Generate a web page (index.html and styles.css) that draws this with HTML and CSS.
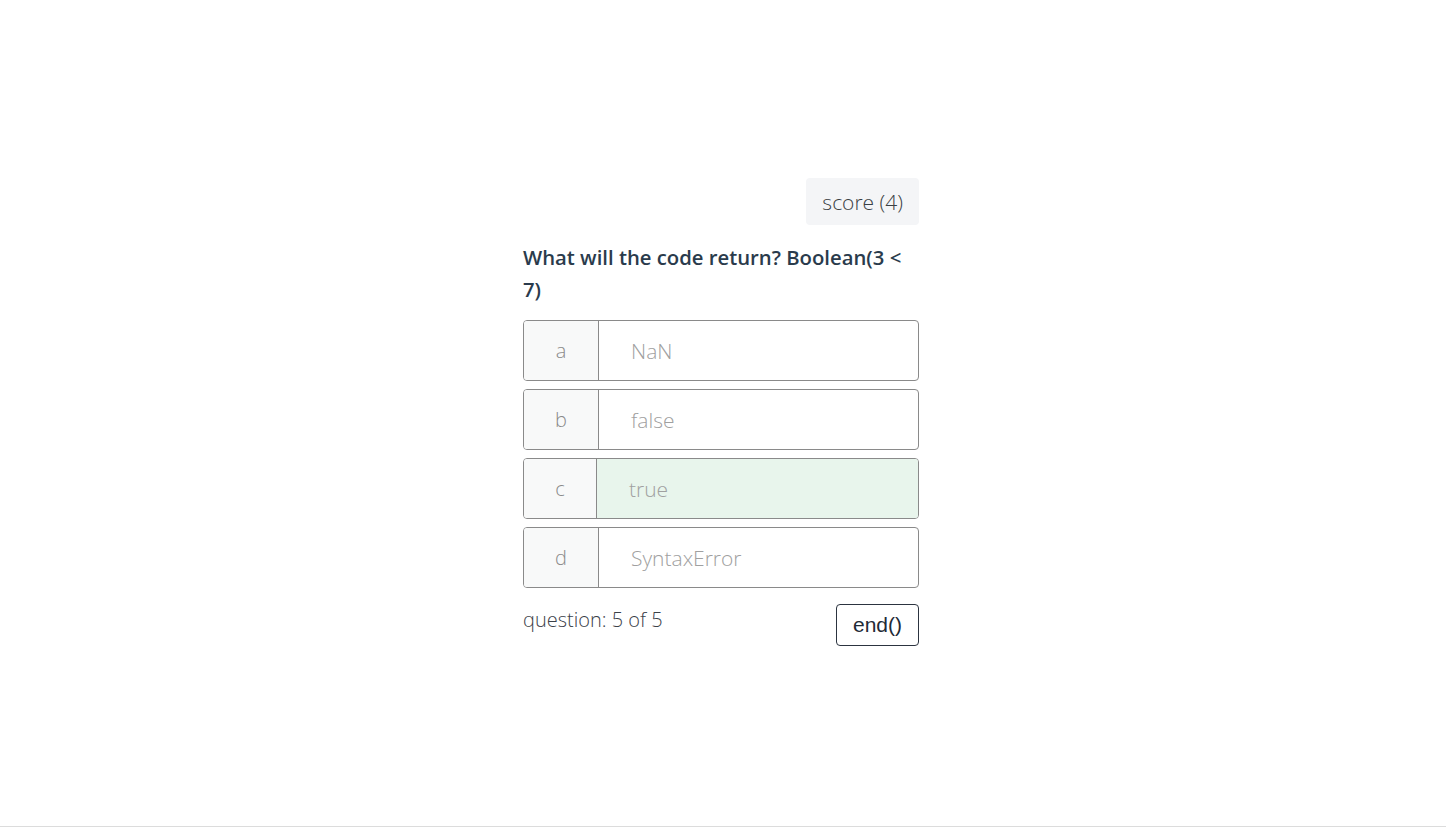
FILE: index.html
```html
<!DOCTYPE html>
<html>
<head>
<meta charset="utf-8">
<link rel="stylesheet" href="styles.css">
</head>
<body>
<div class="page">
  <div class="quiz">
    <div class="top">
      <div class="score">score (4)</div>
    </div>
    <h2 class="question">What will the code return? Boolean(3 &lt; 7)</h2>
    <div class="options">
      <div class="option"><div class="key">a</div><div class="answer">NaN</div></div>
      <div class="option"><div class="key">b</div><div class="answer">false</div></div>
      <div class="option correct"><div class="key">c</div><div class="answer">true</div></div>
      <div class="option"><div class="key">d</div><div class="answer">SyntaxError</div></div>
    </div>
    <div class="footer">
      <span class="progress">question: 5 of 5</span>
      <button class="end">end()</button>
    </div>
  </div>
</div>
</body>
</html>
```

FILE: styles.css
```css
html, body {
  margin: 0;
  padding: 0;
  background: #fff;
}
body {
  font-family: "Open Sans", "Liberation Sans", sans-serif;
  color: #2c3e50;
}
.page {
  height: 826px;
  border-bottom: 1px solid #dcdcdc;
  display: flex;
  align-items: center;
  justify-content: center;
  padding-right: 4px;
  box-sizing: content-box;
}
.quiz {
  width: 396px;
  margin-bottom: 2px;
}
.top {
  display: flex;
  justify-content: flex-end;
}
.score {
  background: #f4f5f7;
  border-radius: 4px;
  height: 47px;
  padding: 0 16px;
  display: flex;
  align-items: center;
  font-size: 21px;
  font-weight: 300;
  color: #3a3f44;
}
.question {
  margin: 16px 0 15px;
  font-size: 20.3px;
  font-weight: 600;
  line-height: 32px;
  color: #2a3b4c;
}
.options {
  display: flex;
  flex-direction: column;
  gap: 8px;
}
.option {
  display: flex;
  height: 61px;
  box-sizing: border-box;
  border: 1px solid #8a8a8a;
  border-radius: 4px;
  overflow: hidden;
}
.key {
  width: 75px;
  flex: none;
  background: #f8f9f9;
  border-right: 1px solid #8a8a8a;
  display: flex;
  align-items: center;
  justify-content: center;
  font-size: 20px;
  font-weight: 300;
  color: #8a8a8a;
  box-sizing: border-box;
}
.answer {
  flex: 1;
  display: flex;
  align-items: center;
  padding-left: 32px;
  font-size: 21px;
  font-weight: 300;
  color: #a0a0a0;
}
.correct .key {
  width: 73px;
}
.correct .answer {
  background: #e8f5ec;
}
.footer {
  display: flex;
  justify-content: space-between;
  align-items: flex-start;
  margin-top: 16px;
}
.progress {
  font-size: 20px;
  font-weight: 300;
  color: #3b4149;
  line-height: 32px;
}
.end {
  font-family: "Liberation Sans", Arial, sans-serif;
  font-size: 21px;
  color: #1f2a36;
  background: #fff;
  border: 1px solid #2c3440;
  border-radius: 4px;
  height: 42px;
  width: 83px;
  padding: 0;
  cursor: pointer;
}
```
